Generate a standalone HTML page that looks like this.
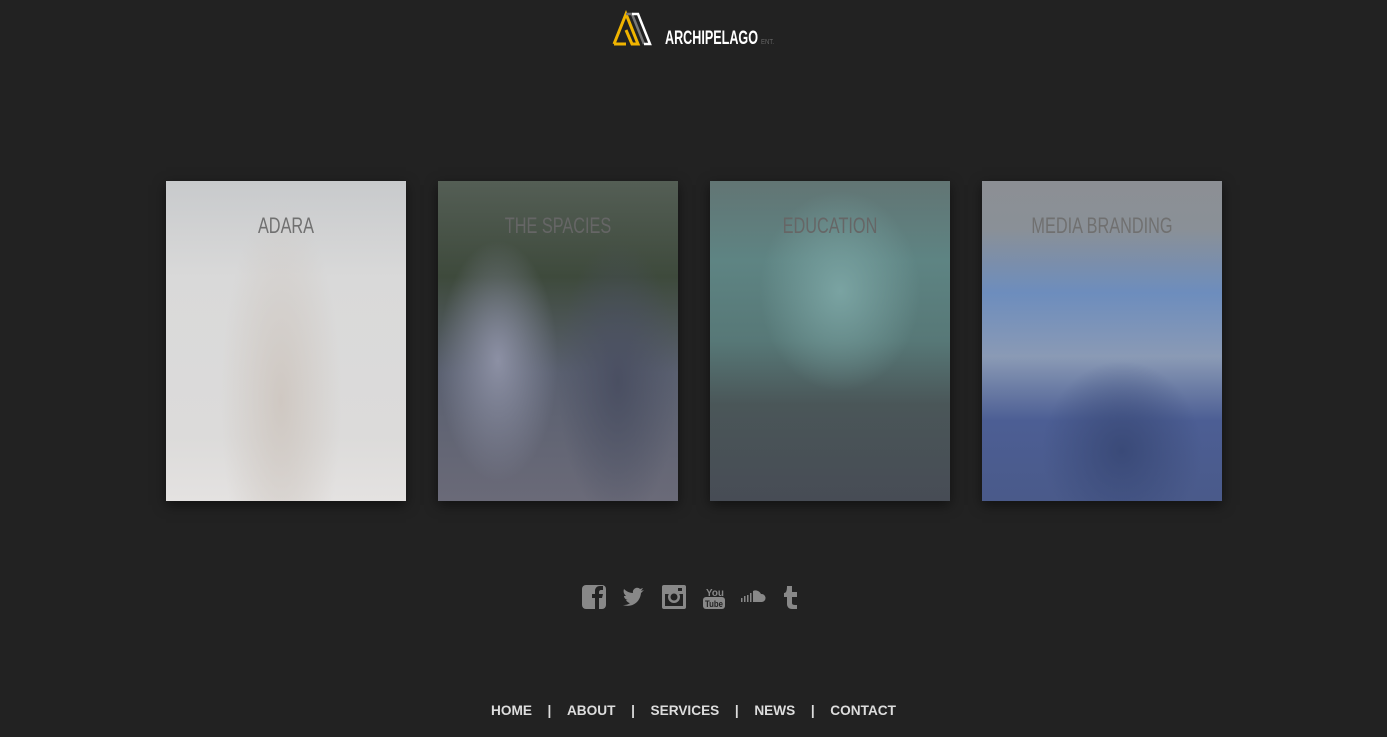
<!DOCTYPE html>
<html><head><style>
body{margin:0;background:#222;width:1387px;height:737px;overflow:hidden;font-family:"Liberation Sans",sans-serif;position:relative}
.logo{position:absolute;left:612px;top:10px}
.card{position:absolute;top:181px;width:240px;height:320px;box-shadow:0 4px 12px rgba(0,0,0,.5);overflow:hidden}
.card span{position:absolute;left:0;width:100%;text-align:center;color:#666;font-size:22px;transform:scaleX(.74);top:32px}
.c1{left:166px;background:radial-gradient(ellipse 60px 200px at 115px 220px,#cfc8c2,transparent),linear-gradient(#c8cacc,#d9d9d9 30%,#dcdbda 80%,#e4e2e1)}
.c2{left:438px;background:radial-gradient(ellipse 60px 120px at 60px 180px,#8c90a4,transparent),radial-gradient(ellipse 60px 140px at 180px 200px,#4a4f62,transparent),linear-gradient(#545e55,#3e4a3c 30%,#5a6070 60%,#6a6a78)}
.c3{left:710px;background:radial-gradient(ellipse 80px 100px at 130px 110px,#7aa3a2,transparent),linear-gradient(#627574,#5e8483 25%,#577877 50%,#4a5658 70%,#474c55)}
.c4{left:982px;background:radial-gradient(ellipse 80px 90px at 140px 270px,#3a4a78,transparent),linear-gradient(#8c8f94,#8a9097 15%,#6d8dbd 35%,#8a9ab5 55%,#4c5e94 75%,#4a5a8a)}
.c4 span,.c1 span{color:#707070}
.icons{position:absolute;top:584px;left:582px}
.nav{position:absolute;top:702px;left:0;width:100%;text-align:center;color:#ddd;font-size:14px;font-weight:bold;transform:scaleX(.975)}
.nav b{margin:0 16px}
</style></head><body>
<svg class="logo" width="170" height="40" viewBox="0 0 170 40">
<path d="M2 34 L14 4 L26 34 L20 34 L14 20" fill="none" stroke="#f0b400" stroke-width="3"/>
<path d="M14 4 L20 4 L32 34" fill="none" stroke="#777" stroke-width="2.5"/>
<path d="M20 4 L26 4 L38 34 L32 34" fill="none" stroke="#fff" stroke-width="2.5"/>
<path d="M2 34 L14 34" stroke="#f0b400" stroke-width="3"/>
<text x="53" y="34" fill="#fff" font-size="19" font-weight="bold" textLength="93" lengthAdjust="spacingAndGlyphs">ARCHIPELAGO</text>
<text x="149" y="34" fill="#666" font-size="7" textLength="13" lengthAdjust="spacingAndGlyphs">ENT.</text>
</svg>
<div class="card c1"><span>ADARA</span></div>
<div class="card c2"><span>THE SPACIES</span></div>
<div class="card c3"><span>EDUCATION</span></div>
<div class="card c4"><span>MEDIA BRANDING</span></div>
<svg class="icons" width="230" height="30" viewBox="0 0 230 30">
<g fill="#888">
<rect x="0" y="1" width="24" height="24" rx="4"/>
<path d="M13 25V14h-3v-4h3V7c0-3 2-5 5-5h3v4h-2c-1 0-2 1-2 2v2h4l-1 4h-3v11z" fill="#222"/>
<path d="M41 21c8 3 17-2 18-12l3-3-3 1 2-3-3 1c-3-3-8 0-7 4-4 0-7-2-9-4-1 3 0 5 2 7h-2c0 2 2 4 4 4h-2c1 2 3 3 4 3-2 2-5 2-7 2z"/>
<rect x="80" y="1" width="24" height="24" rx="2"/>
<rect x="83" y="10" width="18" height="12" fill="#222"/>
<circle cx="92" cy="13" r="6" fill="#888"/><circle cx="92" cy="13" r="3.5" fill="#222"/>
<rect x="96" y="4" width="4" height="3" fill="#222"/>
<text x="124" y="12" font-size="10" font-weight="bold" textLength="18" lengthAdjust="spacingAndGlyphs">You</text>
<rect x="121" y="13" width="22" height="12" rx="3"/>
<text x="123" y="23" font-size="9" font-weight="bold" fill="#222" textLength="18" lengthAdjust="spacingAndGlyphs">Tube</text>
<path d="M171 18h9a4 4 0 0 0-1-8 6 6 0 0 0-8-3z"/>
<rect x="168" y="9" width="1.5" height="9"/><rect x="165" y="11" width="1.5" height="7"/><rect x="162" y="12" width="1.5" height="6"/><rect x="159" y="14" width="1.5" height="4"/>
<path d="M205 2h5v6h5v5h-5v6c0 2 2 2 5 2v4h-5c-3 0-5-2-5-5v-7h-3v-4c2 0 3-2 3-7z"/>
</g></svg>
<div class="nav">HOME<b>|</b>ABOUT<b>|</b>SERVICES<b>|</b>NEWS<b>|</b>CONTACT</div>
</body></html>
